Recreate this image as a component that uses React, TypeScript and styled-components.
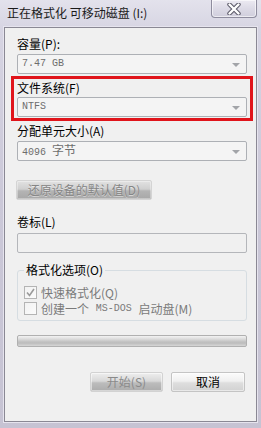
import React from "react";
import styled, { createGlobalStyle } from "styled-components";

const Global = createGlobalStyle`
  html, body { margin: 0; padding: 0; background: #c9c6d6; }
  * { box-sizing: border-box; }
`;

const Window = styled.div`
  width: 261px;
  height: 428px;
  background: linear-gradient(180deg, #e3e2ec 0px, #d6d4e2 30px, #cbc8d8 200px, #c6c3d3 428px);
  font-family: "Noto Sans CJK SC", "Noto Sans", sans-serif;
  font-size: 12px;
  overflow: hidden;
`;

const TitleBar = styled.div`
  height: 27px;
  display: flex;
  justify-content: space-between;
  align-items: flex-start;
  padding-left: 7px;
`;

const TitleText = styled.div`
  margin-top: 6px;
  line-height: 14px;
  font-size: 12px;
  color: #1a1a1a;
  white-space: nowrap;
`;

const CloseButton = styled.div`
  width: 46px;
  height: 18px;
  margin-right: 4px;
  border: 1px solid #8e8c9e;
  border-top: none;
  border-radius: 0 0 4px 4px;
  background: linear-gradient(180deg, #eceaf2 0%, #dcdae6 50%, #d0cedc 100%);
  box-shadow: inset 0 0 0 1px rgba(255, 255, 255, 0.6);
  display: flex;
  align-items: center;
  justify-content: center;
`;

const Client = styled.div`
  margin: 0 4px;
  height: 395px;
  border: 1px solid #8a8894;
  background: #f0f0f0;
  box-shadow: 0 0 0 1px #e6e4ee;
  padding: 9px 9px 0 12px;
  display: flex;
  flex-direction: column;
`;

const Label = styled.div<{ $mt?: number }>`
  height: 14px;
  line-height: 14px;
  font-size: 12px;
  color: #000;
  margin-top: ${(p) => p.$mt ?? 0}px;
  white-space: nowrap;
`;

const Combo = styled.div<{ $mt?: number }>`
  height: 20px;
  width: 230px;
  margin-top: ${(p) => p.$mt ?? 0}px;
  border: 1px solid #adb0b5;
  border-radius: 2px;
  background: #f4f4f4;
  display: flex;
  align-items: center;
  justify-content: space-between;
  padding: 0 6px 0 4px;
  color: #6d6d6d;
  font-family: "Liberation Mono", "Noto Sans CJK SC", monospace;
  font-size: 10px;
  white-space: pre;
`;

const ComboText = styled.span`
  line-height: 14px;
  font-size: 10px;
  & > .cjk {
    font-family: "Noto Sans CJK SC", sans-serif;
    font-size: 12px;
  }
`;

const Arrow = styled.span`
  width: 0;
  height: 0;
  border-left: 4px solid transparent;
  border-right: 4px solid transparent;
  border-top: 4px solid #a2a4a8;
  margin-top: 1px;
`;

const Highlight = styled.div`
  margin: 2px -6px 0 -6px;
  border: 3px solid #e0141b;
  padding: 2px 3px 1px 3px;
  display: flex;
  flex-direction: column;
`;

const RestoreButton = styled.div`
  margin-top: 19px;
  margin-left: -1px;
  width: 136px;
  height: 20px;
  border: 1px solid #d4d4d4;
  border-radius: 2px;
  background: linear-gradient(180deg, #e2e2e2 0%, #cfcfcf 45%, #b4b4b4 55%, #a8a8a8 100%);
  box-shadow: inset 0 0 0 1px rgba(255, 255, 255, 0.35);
  color: #858585;
  text-shadow: 0 1px 0 rgba(255, 255, 255, 0.5);
  display: flex;
  align-items: center;
  justify-content: center;
  font-size: 12px;
  line-height: 14px;
  white-space: nowrap;
`;

const TextInput = styled.div`
  margin-top: 4px;
  width: 230px;
  height: 20px;
  border: 1px solid #b4b6ba;
  border-radius: 2px;
  background: #f0f0f0;
`;

const Group = styled.fieldset`
  margin: 10px 0 0 0;
  width: 230px;
  border: 1px solid #d6dde2;
  border-radius: 3px;
  padding: 7px 6px 4px 6px;
  min-width: 0;
  display: flex;
  flex-direction: column;
`;

const Legend = styled.legend`
  padding: 0 2px;
  height: 14px;
  line-height: 14px;
  font-size: 12px;
  color: #000;
`;

const CheckRow = styled.div`
  height: 16px;
  display: flex;
  align-items: center;
  gap: 4px;
  color: #7a7a7a;
  font-size: 12px;
  white-space: pre;
`;

const Box = styled.span`
  width: 13px;
  height: 13px;
  border: 1px solid #b4b4b4;
  background: linear-gradient(135deg, #f2f2f2 0%, #fbfbfb 100%);
  display: flex;
  align-items: center;
  justify-content: center;
  flex-shrink: 0;
`;

const Mono = styled.span`
  font-family: "Liberation Mono", monospace;
  font-size: 10px;
`;

const Progress = styled.div`
  margin-top: 14px;
  width: 230px;
  height: 12px;
  border: 1px solid #b0b0b0;
  border-radius: 2px;
  background: linear-gradient(180deg, #f2f2f2 0%, #dcdcdc 30%, #c4c4c4 55%, #bcbcbc 70%, #d6d6d6 100%);
`;

const ButtonRow = styled.div`
  margin-top: 25px;
  width: 230px;
  display: flex;
  justify-content: flex-end;
  gap: 8px;
  padding-right: 2px;
`;

const DialogButton = styled.div<{ $disabled?: boolean }>`
  width: ${(p) => (p.$disabled ? 73 : 74)}px;
  height: 20px;
  border: 1px solid ${(p) => (p.$disabled ? "#d2d2d2" : "#c4c4c4")};
  border-radius: 2px;
  background: ${(p) =>
    p.$disabled
      ? "linear-gradient(180deg, #eeeeee 0%, #d8d8d8 45%, #bcbcbc 55%, #acacac 100%)"
      : "linear-gradient(180deg, #fbfbfb 0%, #f0f0f0 45%, #dedede 55%, #d2d2d2 100%)"};
  box-shadow: inset 0 0 0 1px rgba(255, 255, 255, 0.5);
  color: ${(p) => (p.$disabled ? "#8a8a8a" : "#000")};
  display: flex;
  align-items: center;
  justify-content: center;
  font-size: 12px;
  line-height: 14px;
  white-space: nowrap;
`;

export default function App() {
  return (
    <>
      <Global />
      <Window>
        <TitleBar>
          <TitleText>正在格式化 可移动磁盘 (I:)</TitleText>
          <CloseButton>
            <svg width="14" height="12" viewBox="0 0 14 12">
              <path
                d="M2.5 1.5 L11.5 10.5 M11.5 1.5 L2.5 10.5"
                stroke="#5d5b6a"
                strokeWidth="4.4"
                strokeLinecap="round"
              />
              <path
                d="M2.5 1.5 L11.5 10.5 M11.5 1.5 L2.5 10.5"
                stroke="#ffffff"
                strokeWidth="2.4"
                strokeLinecap="round"
              />
            </svg>
          </CloseButton>
        </TitleBar>
        <Client>
          <Label>容量(P):</Label>
          <Combo $mt={3}>
            <ComboText>7.47 GB</ComboText>
            <Arrow />
          </Combo>
          <Highlight>
            <Label>文件系统(F)</Label>
            <Combo $mt={2}>
              <ComboText>NTFS</ComboText>
              <Arrow />
            </Combo>
          </Highlight>
          <Label $mt={3}>分配单元大小(A)</Label>
          <Combo $mt={3}>
            <ComboText>
              4096 <span className="cjk">字节</span>
            </ComboText>
            <Arrow />
          </Combo>
          <RestoreButton>还原设备的默认值(D)</RestoreButton>
          <Label $mt={15}>卷标(L)</Label>
          <TextInput />
          <Group>
            <Legend>格式化选项(O)</Legend>
            <CheckRow>
              <Box>
                <svg width="9" height="9" viewBox="0 0 9 9">
                  <path d="M1 4.5 L3.5 7.5 L8 1" stroke="#9a9a9a" strokeWidth="1.6" fill="none" />
                </svg>
              </Box>
              快速格式化(Q)
            </CheckRow>
            <CheckRow>
              <Box />
              创建一个 <Mono>MS-DOS</Mono> 启动盘(M)
            </CheckRow>
          </Group>
          <Progress />
          <ButtonRow>
            <DialogButton $disabled>开始(S)</DialogButton>
            <DialogButton>取消</DialogButton>
          </ButtonRow>
        </Client>
      </Window>
    </>
  );
}
